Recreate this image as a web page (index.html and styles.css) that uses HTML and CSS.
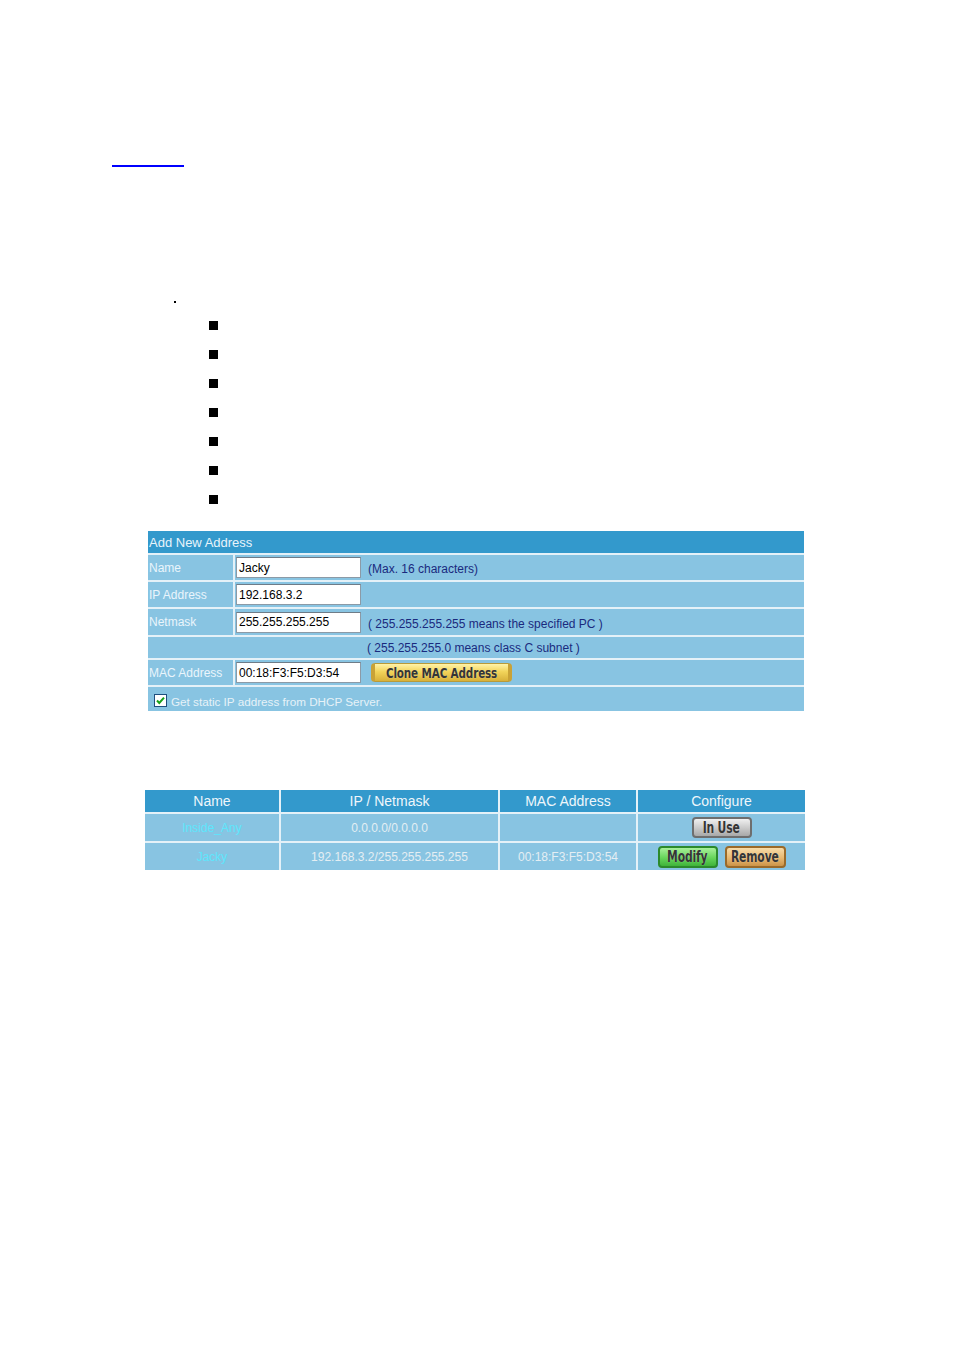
FILE: index.html
```html
<!DOCTYPE html>
<html>
<head>
<meta charset="utf-8">
<link rel="stylesheet" href="styles.css">
</head>
<body>
<div class="page">
  <a class="toplink" href="#"></a>
  <div class="dot"></div>
  <ul class="bullets">
    <li></li><li></li><li></li><li></li><li></li><li></li><li></li>
  </ul>

  <div class="form">
    <div class="f-head">Add New Address</div>

    <div class="f-label">Name</div>
    <div class="f-val"><span class="input">Jacky</span><span class="hint">(Max. 16 characters)</span></div>

    <div class="f-label">IP Address</div>
    <div class="f-val"><span class="input">192.168.3.2</span></div>

    <div class="f-label">Netmask</div>
    <div class="f-val"><span class="input">255.255.255.255</span><span class="hint">( 255.255.255.255 means the specified PC )</span></div>

    <div class="f-wide f-sub"><span class="hint hint-sub">( 255.255.255.0 means class C subnet )</span></div>

    <div class="f-label">MAC Address</div>
    <div class="f-val"><span class="input">00:18:F3:F5:D3:54</span><span class="btn btn-yellow btn-clone"><span>Clone MAC Address</span></span></div>

    <div class="f-wide f-check">
      <svg class="cb" width="13" height="13" viewBox="0 0 13 13"><rect x="0.5" y="0.5" width="12" height="12" fill="#fff" stroke="#1e4f7e"/><path d="M3 6.5 L5.3 9 L10 3.6" fill="none" stroke="#18a018" stroke-width="2"/></svg>
      <span class="check-text">Get static IP address from DHCP Server.</span>
    </div>
  </div>

  <div class="list">
    <div class="l-head">Name</div>
    <div class="l-head">IP / Netmask</div>
    <div class="l-head">MAC Address</div>
    <div class="l-head">Configure</div>

    <div class="l-cell l-name">Inside_Any</div>
    <div class="l-cell">0.0.0.0/0.0.0.0</div>
    <div class="l-cell"></div>
    <div class="l-cell l-conf"><span class="btn btn-gray btn-inuse"><span>In Use</span></span></div>

    <div class="l-cell l-name">Jacky</div>
    <div class="l-cell">192.168.3.2/255.255.255.255</div>
    <div class="l-cell">00:18:F3:F5:D3:54</div>
    <div class="l-cell l-conf"><span class="btn btn-green btn-modify"><span>Modify</span></span><span class="btn btn-orange btn-remove"><span>Remove</span></span></div>
  </div>
</div>
</body>
</html>
```

FILE: styles.css
```css
html, body {
  margin: 0;
  padding: 0;
  background: #ffffff;
}
.page {
  width: 954px;
  height: 1350px;
  font-family: "Liberation Sans", Arial, sans-serif;
  overflow: hidden;
}
.toplink {
  display: block;
  margin: 165px 0 0 112px;
  width: 72px;
  height: 2px;
  background: #0000ff;
}
.dot {
  margin: 134px 0 0 174px;
  width: 2px;
  height: 2px;
  background: #000;
}
.bullets {
  list-style: none;
  margin: 8px 0 0 0;
  padding: 0 0 0 209px;
}
.bullets li {
  height: 29px;
  display: flex;
  align-items: center;
}
.bullets li::before {
  content: "";
  width: 9px;
  height: 9px;
  background: #000;
}

/* Add new address form */
.form {
  margin: 17px 0 0 148px;
  width: 656px;
  display: grid;
  grid-template-columns: 85px 1fr;
  grid-template-rows: 22px 25px 25px 26px 21px 25px 24px;
  gap: 2px;
  background: #e4f1f8;
}
.f-head {
  grid-column: 1 / 3;
  background: #3399cc;
  color: #e8f4fb;
  font-size: 13px;
  display: flex;
  align-items: center;
  padding-left: 1px;
}
.f-label {
  background: #88c4e2;
  color: #eaf5fc;
  font-size: 12px;
  display: flex;
  align-items: center;
  padding-left: 1px;
}
.f-val {
  background: #88c4e2;
  display: flex;
  align-items: center;
  padding-left: 1px;
}
.f-wide {
  grid-column: 1 / 3;
  background: #88c4e2;
  display: flex;
  align-items: center;
}
.input {
  box-sizing: border-box;
  width: 125px;
  height: 21px;
  background: #fff;
  border: 1px solid #8c9aa6;
  border-top-color: #6f7c88;
  font-size: 12px;
  color: #000;
  display: flex;
  align-items: center;
  padding-left: 2px;
}
.hint {
  color: #1a2a7e;
  font-size: 12px;
  margin-left: 7px;
  padding-top: 3px;
}
.f-sub {
  padding-left: 219px;
}
.hint-sub {
  margin-left: 0;
  padding-top: 0;
}
.f-check {
  padding-left: 6px;
}
.cb {
  display: block;
  margin-top: 2px;
}
.check-text {
  color: #e6f2f8;
  font-size: 11.7px;
  margin-left: 4px;
  padding-top: 5px;
}

/* buttons */
.btn {
  box-sizing: border-box;
  display: inline-flex;
  align-items: center;
  justify-content: center;
  border-radius: 4px;
  font-family: "DejaVu Sans Condensed", "DejaVu Sans", sans-serif;
  font-weight: bold;
  font-size: 15px;
  color: #353535;
  text-shadow: 0 0 1px rgba(255,255,255,0.5);
  overflow: hidden;
  white-space: nowrap;
}
.btn span {
  display: inline-block;
  transform: scaleX(0.8);
  letter-spacing: -0.2px;
}
.btn-yellow {
  background: linear-gradient(#fff3a8, #f2d45a 45%, #d8b13a);
  border: 1px solid #b89a3a;
  border-left: 4px solid #c9a236;
  border-right: 4px solid #c9a236;
}
.btn-clone {
  width: 141px;
  height: 19px;
  margin-left: 10px;
  font-size: 14.5px;
}
.btn-gray {
  background: linear-gradient(#f0f0f0, #c8c8c8 55%, #a8a8a8);
  border: 2px solid #6e6e6e;
}
.btn-inuse {
  width: 60px;
  height: 21px;
}
.btn-green {
  background: linear-gradient(#a8f09a, #66d55a 55%, #3fb33a);
  border: 2px solid #2c8a2c;
}
.btn-modify {
  width: 60px;
  height: 22px;
}
.btn-orange {
  background: linear-gradient(#f8dca8, #e8b872 55%, #cc9448);
  border: 2px solid #9a6a2a;
}
.btn-remove {
  width: 61px;
  height: 22px;
  margin-left: 7px;
}

/* address list */
.list {
  margin: 79px 0 0 145px;
  width: 660px;
  display: grid;
  grid-template-columns: 134px 217px 136px 167px;
  grid-template-rows: 22px 27px 27px;
  gap: 2px;
  background: #e4f1f8;
}
.l-head {
  background: #3399cc;
  color: #eef6fb;
  font-size: 14px;
  display: flex;
  align-items: center;
  justify-content: center;
}
.l-cell {
  background: #88c4e2;
  color: #e4eef3;
  font-size: 12px;
  display: flex;
  align-items: center;
  justify-content: center;
}
.l-name {
  color: #5ee6fc;
}
.l-conf {
  justify-content: center;
}
```
